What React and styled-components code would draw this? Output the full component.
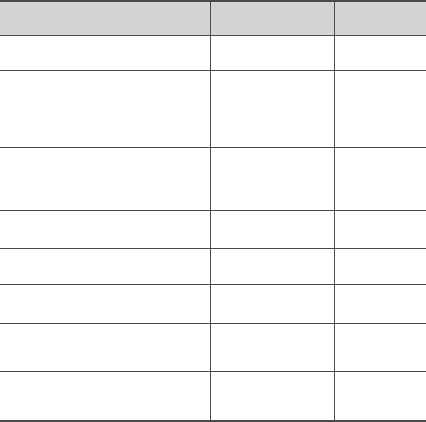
import React from "react";
import styled, { createGlobalStyle } from "styled-components";

const GlobalStyle = createGlobalStyle`
  body {
    margin: 0;
    background: #ffffff;
    font-family: "Liberation Sans", Arial, sans-serif;
  }
`;

const rows = [34, 76, 62, 37, 35, 38, 47, 48];

const App = () => {
  return (
    <>
      <GlobalStyle />
      <Table>
        <Row $head $h={33}>
          <Cell />
          <Cell />
          <Cell $last />
        </Row>
        {rows.map((h, i) => (
          <Row key={i} $h={h} $end={i === rows.length - 1}>
            <Cell />
            <Cell />
            <Cell $last />
          </Row>
        ))}
      </Table>
    </>
  );
};

const Table = styled.div`
  display: flex;
  flex-direction: column;
  width: 426px;
  border-top: 2px solid #4a4a4a;
  border-bottom: 2px solid #4a4a4a;
`;
const Row = styled.div`
  display: grid;
  grid-template-columns: 211px 124px 1fr;
  height: ${(p) => p.$h}px;
  background: ${(p) => (p.$head ? "#d3d3d3" : "#ffffff")};
  border-bottom: ${(p) => (p.$end ? "none" : "1px solid #4a4a4a")};
  box-sizing: content-box;
`;
const Cell = styled.div`
  border-right: ${(p) => (p.$last ? "none" : "1px solid #4a4a4a")};
  font-size: 14px;
  color: #333;
`;

export default App;
